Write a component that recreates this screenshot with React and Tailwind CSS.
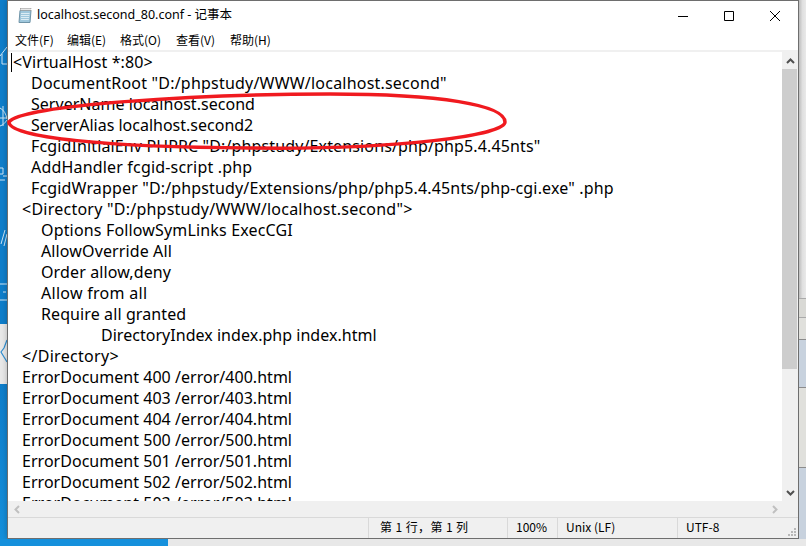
const lines = [
  { text: "<VirtualHost *:80>", style: "pl-[5px] tracking-[0.1px]" },
  { text: 'DocumentRoot "D:/phpstudy/WWW/localhost.second"', style: "pl-[23px] tracking-[0.21px]" },
  { text: "ServerName localhost.second", style: "pl-[23px] tracking-[0.03px]" },
  { text: "ServerAlias localhost.second2", style: "pl-[23px]" },
  { text: 'FcgidInitialEnv PHPRC "D:/phpstudy/Extensions/php/php5.4.45nts"', style: "pl-[23px] tracking-[0.13px]" },
  { text: "AddHandler fcgid-script .php", style: "pl-[23px] tracking-[0.18px]" },
  { text: 'FcgidWrapper "D:/phpstudy/Extensions/php/php5.4.45nts/php-cgi.exe" .php', style: "pl-[23px] tracking-[0.15px]" },
  { text: '<Directory "D:/phpstudy/WWW/localhost.second">', style: "pl-[14px] tracking-[0.24px]" },
  { text: "Options FollowSymLinks ExecCGI", style: "pl-[33px] tracking-[0.16px]" },
  { text: "AllowOverride All", style: "pl-[33px] tracking-[0.12px]" },
  { text: "Order allow,deny", style: "pl-[33px] tracking-[0.12px]" },
  { text: "Allow from all", style: "pl-[33px] tracking-[0.28px]" },
  { text: "Require all granted", style: "pl-[33px] tracking-[0.1px]" },
  { text: "DirectoryIndex index.php index.html", style: "pl-[93px] tracking-[0.03px]" },
  { text: "</Directory>", style: "pl-[14px] tracking-[0.3px]" },
  { text: "ErrorDocument 400 /error/400.html", style: "pl-[14px] tracking-[0.03px]" },
  { text: "ErrorDocument 403 /error/403.html", style: "pl-[14px] tracking-[0.03px]" },
  { text: "ErrorDocument 404 /error/404.html", style: "pl-[14px] tracking-[0.03px]" },
  { text: "ErrorDocument 500 /error/500.html", style: "pl-[14px] tracking-[0.03px]" },
  { text: "ErrorDocument 501 /error/501.html", style: "pl-[14px] tracking-[0.03px]" },
  { text: "ErrorDocument 502 /error/502.html", style: "pl-[14px] tracking-[0.03px]" },
  { text: "ErrorDocument 503 /error/503.html", style: "pl-[14px] tracking-[0.03px]" },
];

const menus = [
  { label: "文件(F)", width: "w-[52px]" },
  { label: "编辑(E)", width: "w-[53px]" },
  { label: "格式(O)", width: "w-[56px]" },
  { label: "查看(V)", width: "w-[54px]" },
  { label: "帮助(H)", width: "w-[52px]" },
];

function NotepadIcon() {
  return (
    <svg width="16" height="17" viewBox="0 0 16 17">
      <path d="M3 3.5h11l-1 12H2z" fill="#9fc7dc" stroke="#6f94a8" />
      <path d="M4 6.5h8.5M4 8.5h8.3M4 10.5h8M4 12.5h7.8" stroke="#dcecf4" />
      <path d="M3.5 1.5h10.5v2H3.5z" fill="#e8e8e8" stroke="#8a8a8a" strokeDasharray="1 1" />
    </svg>
  );
}

function LeftStrip() {
  return (
    <div className="w-[7px] shrink-0 flex flex-col bg-[#0f7ecb]">
      <svg className="h-[324px] w-[7px]" viewBox="0 0 7 324" fill="none" stroke="#cfe6f5" strokeWidth="1">
        <path d="M0 56l7-9M2 54v10h5" />
        <path d="M0 108c4 2 6 6 7 11M0 118h7M3 106v20M0 126c3-1 5-3 7-6" />
        <path d="M0 168h3v6H0M3 176h4M0 180h5" />
        <path d="M1 244l4-14M4 246l3-12" />
        <path d="M0 284h7M3 292h3M0 300h7" />
      </svg>
      <div className="h-[60px] bg-[#e9e9e9] flex items-center">
        <svg width="7" height="60" viewBox="0 0 7 60" fill="none" stroke="#2f8fd2" strokeWidth="1.2">
          <path d="M7 16l-3 8-3 4 3 5 3 5" />
        </svg>
      </div>
      <div className="flex-1 bg-gradient-to-b from-[#0f7ecb] to-[#1590dc]" />
    </div>
  );
}

function RightStrip() {
  return (
    <div className="w-[7px] shrink-0 flex flex-col bg-[#e6e6e6] text-[0px]">
      <div className="h-[298px] bg-gradient-to-r from-[#bdbdbd] via-[#e0e0e0] to-[#e9e9e9]" />
      <div className="h-[19px] bg-[#d9d9d5] border-t border-[#aaaaaa]" />
      <div className="h-[22px] bg-[#e0e0dc] border-t border-[#aaaaaa]" />
      <div className="h-[48px] bg-[#c8d2de] border-t border-[#8c8c8c]" />
      <div className="h-[80px] bg-[#e0e0dc] border-t border-[#8c8c8c]" />
      <div className="flex-1 bg-[#c8d2de] border-t border-[#8c8c8c]" />
    </div>
  );
}

function Editor() {
  return (
    <div className="relative flex-1 min-w-0 bg-white overflow-hidden font-['Noto_Sans',sans-serif] text-[16px] leading-[21px] text-black">
      <div className="flex flex-col">
        {lines.map((line, i) => (
          <div key={i} className={`h-[21px] whitespace-pre ${line.style}`}>
            {line.text}
          </div>
        ))}
      </div>
      <div className="absolute left-[3px] top-[1px] w-px h-[19px] bg-black" />
    </div>
  );
}

function VerticalScrollbar() {
  return (
    <div className="w-[16px] shrink-0 flex flex-col bg-[#f0f0f0]">
      <div className="h-[17px] flex items-center justify-center">
        <svg width="9" height="6" viewBox="0 0 9 6" fill="none" stroke="#505050" strokeWidth="2">
          <path d="M1 5l3.5-3.5L8 5" />
        </svg>
      </div>
      <div className="h-[300px] w-[15px] bg-[#cdcdcd]" />
      <div className="flex-1" />
      <div className="h-[17px] flex items-center justify-center">
        <svg width="9" height="6" viewBox="0 0 9 6" fill="none" stroke="#505050" strokeWidth="2">
          <path d="M1 1l3.5 3.5L8 1" />
        </svg>
      </div>
    </div>
  );
}

function StatusCell({ className, children }) {
  return (
    <div className={`h-full border-l border-[#d9d9d9] flex items-center pb-[2px] whitespace-pre ${className}`}>
      {children}
    </div>
  );
}

export default function App() {
  return (
    <div className="relative w-[806px] h-[546px] overflow-hidden flex flex-col bg-[#e8e8e8]">
      <div className="flex h-[539px] shrink-0">
        <LeftStrip />
        <div className="w-[792px] shrink-0 flex flex-col bg-white border border-[#6e6e6e] shadow-[0_0_6px_rgba(0,0,0,0.25)] font-['Noto_Sans_CJK_SC','Noto_Sans',sans-serif] text-black">
          <div className="h-[29px] shrink-0 flex items-center pl-[9px] text-[12.5px]">
            <NotepadIcon />
            <span className="ml-[4px] font-['Noto_Sans','Noto_Sans_CJK_SC',sans-serif]">localhost.second_80.conf - 记事本</span>
            <div className="ml-auto flex items-center">
              <svg className="w-[46px] h-[29px]" viewBox="0 0 46 29" fill="none" stroke="#000">
                <path d="M18 15.5h10" />
              </svg>
              <svg className="w-[46px] h-[29px]" viewBox="0 0 46 29" fill="none" stroke="#000">
                <path d="M18.5 10.5h9v9h-9z" />
              </svg>
              <svg className="w-[46px] h-[29px]" viewBox="0 0 46 29" fill="none" stroke="#000">
                <path d="M18 10l10 10M28 10L18 20" />
              </svg>
            </div>
          </div>
          <div className="h-[20px] shrink-0 flex items-center pl-[7px] text-[12px]">
            {menus.map((menu) => (
              <span key={menu.label} className={`whitespace-pre ${menu.width}`}>
                {menu.label}
              </span>
            ))}
          </div>
          <div className="h-[2px] shrink-0 bg-[#f0f0f0]" />
          <div className="flex-1 min-h-0 flex">
            <Editor />
            <VerticalScrollbar />
          </div>
          <div className="h-[16px] shrink-0 bg-[#f0f0f0] flex items-center justify-between pl-[6px] pr-[20px]">
            <svg width="6" height="9" viewBox="0 0 6 9" fill="none" stroke="#c0c0c0" strokeWidth="2">
              <path d="M5 1L1.5 4.5 5 8" />
            </svg>
            <svg width="6" height="9" viewBox="0 0 6 9" fill="none" stroke="#c0c0c0" strokeWidth="2">
              <path d="M1 1l3.5 3.5L1 8" />
            </svg>
          </div>
          <div className="h-[21px] shrink-0 relative bg-[#f0f0f0] border-t border-[#d9d9d9] flex text-[12px]">
            <div className="w-[360px]" />
            <StatusCell className="w-[139px] pl-[11px] tracking-[0.4px]">第 1 行，第 1 列</StatusCell>
            <StatusCell className="w-[50px] pl-[8px]">100%</StatusCell>
            <StatusCell className="w-[120px] pl-[8px]">Unix (LF)</StatusCell>
            <StatusCell className="flex-1 pl-[8px]">UTF-8</StatusCell>
            <svg className="absolute right-[1px] bottom-[1px]" width="10" height="10" viewBox="0 0 10 10" fill="#b8b8b8">
              <path d="M7 1h2v2H7zM4 4h2v2H4zM7 4h2v2H7zM1 7h2v2H1zM4 7h2v2H4zM7 7h2v2H7z" />
            </svg>
          </div>
        </div>
        <RightStrip />
      </div>
      <div className="flex-1 flex">
        <div className="w-[168px] bg-[#1590dc]" />
        <div className="flex-1 bg-[#e8e8e8]" />
      </div>
      <svg className="absolute inset-0 pointer-events-none" width="806" height="546" viewBox="0 0 806 546" fill="none">
        <path d="M9 122C20 105 200 94 330 94C440 94 505 105 505 122C505 135 400 150 250 148C110 147 9 138 9 122Z" stroke="#f01a1f" strokeWidth="3.5" />
      </svg>
    </div>
  );
}
